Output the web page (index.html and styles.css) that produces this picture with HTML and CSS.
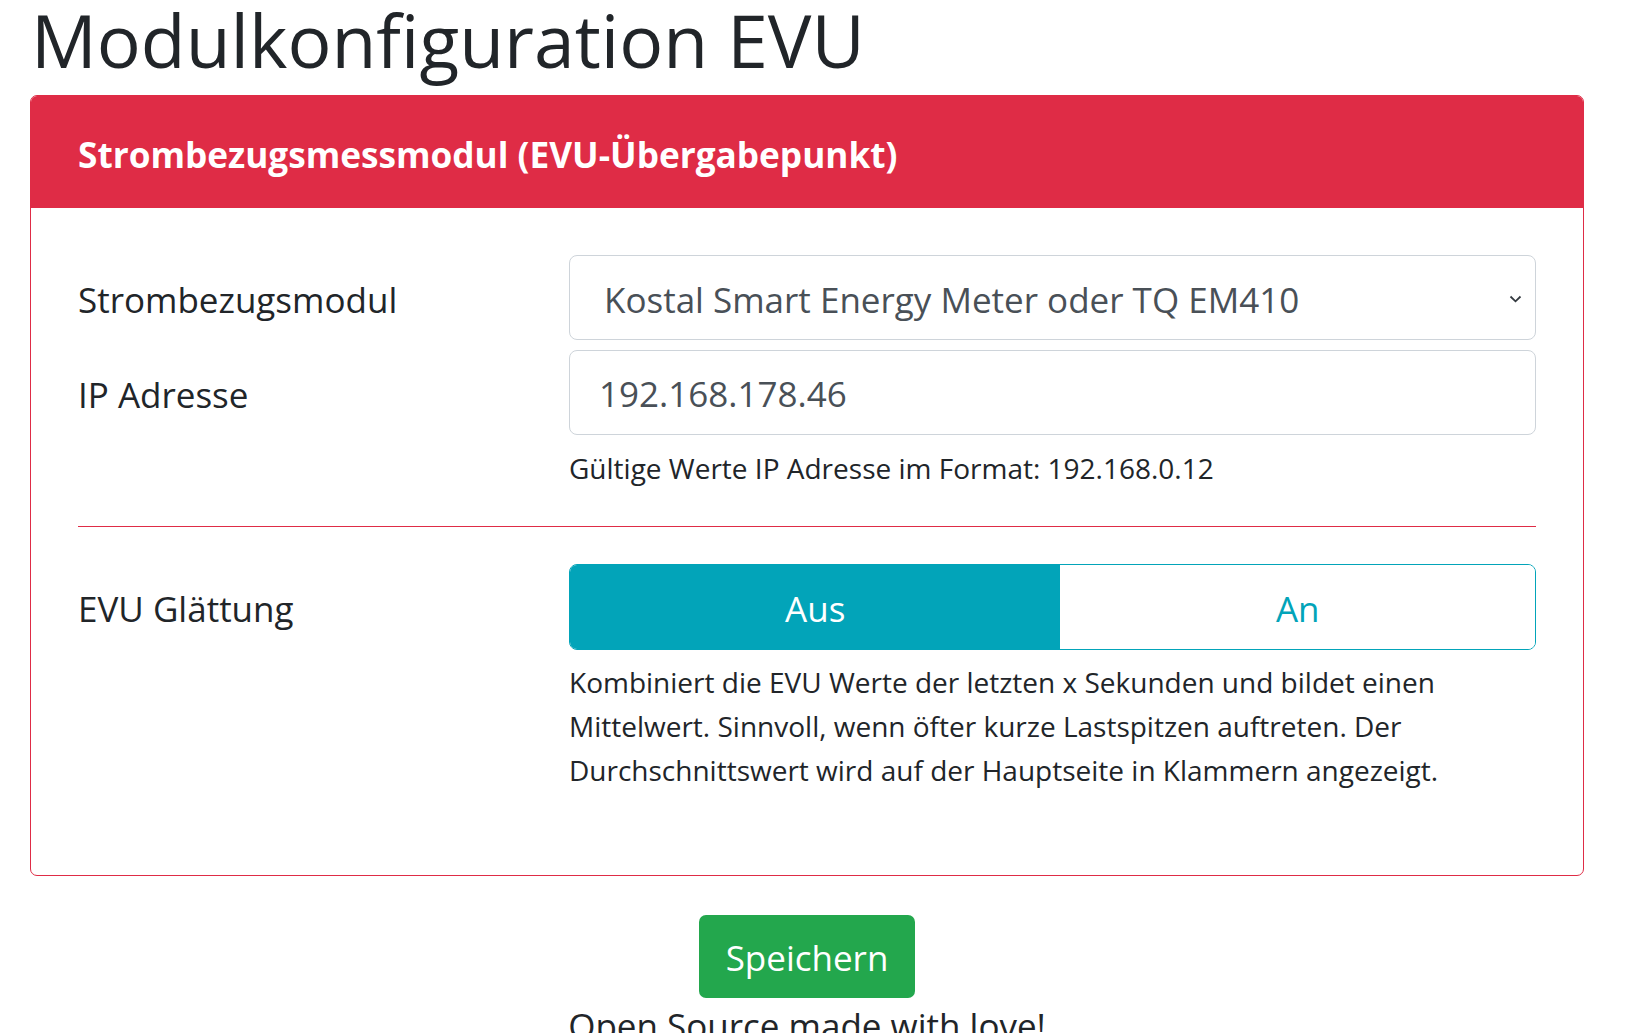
FILE: index.html
```html
<!DOCTYPE html>
<html lang="de">
<head>
<meta charset="utf-8">
<title>Modulkonfiguration EVU</title>
<link rel="stylesheet" href="styles.css">
</head>
<body>
<div class="container">
  <h1 class="page-title">Modulkonfiguration EVU</h1>
  <div class="card">
    <div class="card-header">Strombezugsmessmodul (EVU-Übergabepunkt)</div>
    <div class="card-body">
      <div class="form-row">
        <label class="col-label" for="modul">Strombezugsmodul</label>
        <div class="col-control">
          <div class="select-wrap">
            <select id="modul" class="form-select">
              <option>Kostal Smart Energy Meter oder TQ EM410</option>
            </select>
            <svg class="chevron" width="13" height="8" viewBox="0 0 13 8"><path d="M1.5 1.5 L6.5 6.3 L11.5 1.5" fill="none" stroke="#343a40" stroke-width="1.8"/></svg>
          </div>
        </div>
      </div>
      <div class="form-row row-ip">
        <label class="col-label" for="ip">IP Adresse</label>
        <div class="col-control">
          <input id="ip" class="form-input" type="text" value="192.168.178.46">
          <div class="form-text help-ip">Gültige Werte IP Adresse im Format: 192.168.0.12</div>
        </div>
      </div>
      <hr class="divider">
      <div class="form-row">
        <div class="col-label">EVU Glättung</div>
        <div class="col-control">
          <div class="toggle">
            <button class="toggle-btn active" type="button">Aus</button>
            <button class="toggle-btn" type="button">An</button>
          </div>
        </div>
      </div>
      <div class="form-row">
        <div class="col-label"></div>
        <div class="col-control">
          <div class="form-text desc">Kombiniert die EVU Werte der letzten x Sekunden und bildet einen Mittelwert. Sinnvoll, wenn öfter kurze Lastspitzen auftreten. Der Durchschnittswert wird auf der Hauptseite in Klammern angezeigt.</div>
        </div>
      </div>
    </div>
  </div>
  <div class="actions">
    <button class="btn-save" type="button">Speichern</button>
  </div>
  <footer class="footer">Open Source made with love!</footer>
</div>
</body>
</html>
```
FILE: styles.css
```css
* { box-sizing: border-box; }
html, body { margin: 0; padding: 0; background: #fff; }
body {
  font-family: "Open Sans", "Noto Sans", sans-serif;
  color: #212529;
  font-size: 35px;
}
.container {
  width: 1554px;
  margin-left: 30px;
}
.page-title {
  margin: 0 0 15px 1px;
  font-size: 73.2px;
  line-height: 80px;
  font-weight: 400;
  color: #212529;
}
.card {
  border: 1px solid #df2c46;
  border-radius: 7px;
  overflow: hidden;
}
.card-header {
  background: #df2c46;
  color: #fff;
  height: 112px;
  display: flex;
  align-items: center;
  padding-left: 47px;
  padding-top: 4px;
  font-size: 35.2px;
  font-weight: 700;
}
.card-body {
  padding: 47px 47px 83px 47px;
}
.form-row {
  display: grid;
  grid-template-columns: 491px 1fr;
  align-items: start;
}
.row-ip { margin-top: 10px; }
.col-label {
  display: flex;
  align-items: center;
  min-height: 85px;
  padding-top: 4px;
  color: #212529;
}
.select-wrap { position: relative; }
.form-select, .form-input {
  display: block;
  width: 100%;
  height: 85px;
  border: 1px solid #ced4da;
  border-radius: 8px;
  background: #fff;
  color: #495057;
  font-family: inherit;
  font-size: 35px;
  appearance: none;
  -webkit-appearance: none;
  outline: none;
}
.form-select { padding: 3px 60px 0 34px; }
.form-input { padding: 2px 29px 0 29px; }
.chevron {
  position: absolute;
  right: 14px;
  top: 40px;
}
.form-text {
  font-size: 28px;
  line-height: 44px;
  color: #212529;
}
.help-ip { margin-top: 11px; }
.divider {
  border: 0;
  border-top: 1px solid #df2c46;
  margin: 36px 0 37px 0;
}
.toggle {
  display: grid;
  grid-template-columns: 491fr 475fr;
  height: 86px;
  border: 1px solid #02a4b9;
  border-radius: 8px;
  overflow: hidden;
}
.toggle-btn {
  border: 0;
  margin: 0;
  background: #fff;
  color: #02a4b9;
  font-family: inherit;
  font-size: 35px;
  padding: 2px 0 0 0;
}
.toggle-btn.active {
  background: #02a4b9;
  color: #fff;
}
.desc { margin-top: 10px; }
.actions {
  display: flex;
  justify-content: center;
  margin-top: 39px;
}
.btn-save {
  width: 216px;
  height: 83px;
  border: 0;
  border-radius: 7px;
  background: #23a74d;
  color: #fff;
  font-family: inherit;
  font-size: 35px;
  padding: 2px 0 0 0;
}
.footer {
  text-align: center;
  margin-top: 4px;
  font-size: 35px;
  line-height: 48px;
}
```
